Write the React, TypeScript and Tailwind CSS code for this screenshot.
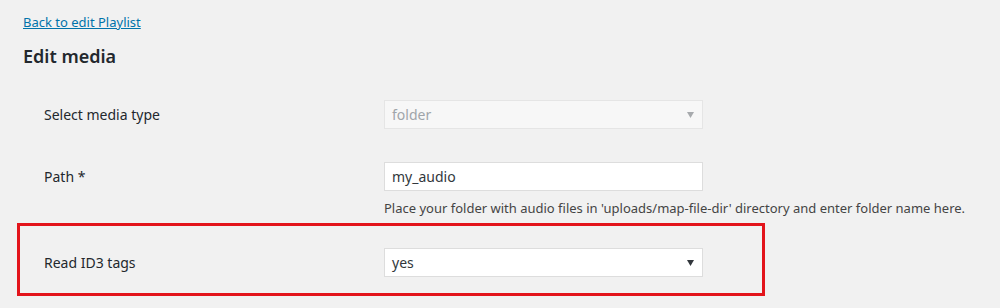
const font = "font-['Segoe_UI','Noto_Sans',sans-serif]";

const Arrow = ({ muted }: { muted?: boolean }) => (
    <svg width="7" height="6" viewBox="0 0 7 6" className="absolute right-[8px] top-1/2 -translate-y-1/2">
        <path d="M0 0 L7 0 L3.5 6 Z" fill={muted ? "#a7aaad" : "#32373c"} />
    </svg>
);

const SelectBox = ({ value, disabled }: { value: string; disabled?: boolean }) => (
    <div
        className={`relative h-[29px] w-[319px] border flex items-center pl-[7px] text-[14px] ${
            disabled ? "bg-[#f7f7f7] border-[#e5e5e5] text-[#a0a5aa]" : "bg-white border-[#dddddd] text-[#32373c]"
        }`}
    >
        {value}
        <Arrow muted={disabled} />
    </div>
);

export default function App() {
    return (
        <div className={`w-[1000px] h-[308px] bg-[#f1f1f1] text-[#23282d] ${font}`}>
            <div className="pl-[23px] pt-[9px]">
                <a href="#" className="text-[13px] leading-[20px] text-[#0073aa] underline">
                    Back to edit Playlist
                </a>
                <h2 className="mt-[11px] text-[18px] leading-[24px] font-semibold text-[#23282d]">Edit media</h2>
            </div>

            <div className="mt-[32px]">
                <div className="flex items-center pl-[44px]">
                    <div className="w-[340px] text-[14px]">Select media type</div>
                    <SelectBox value="folder" disabled />
                </div>

                <div className="flex items-start pl-[44px] mt-[33px]">
                    <div className="w-[340px] text-[14px] leading-[29px]">Path *</div>
                    <div>
                        <div className="h-[29px] w-[319px] bg-white border border-[#dddddd] flex items-center pl-[7px] text-[14px] text-[#32373c]">
                            my_audio
                        </div>
                        <p className="mt-[7px] text-[13px] leading-[20px] text-[#444]">
                            Place your folder with audio files in 'uploads/map-file-dir' directory and enter folder name here.
                        </p>
                    </div>
                </div>

                <div className="ml-[17px] mt-[5px] w-[748px] h-[73px] border-[3px] border-[#e3141b] flex items-center pl-[24px] pt-[6px]">
                    <div className="w-[340px] text-[14px]">Read ID3 tags</div>
                    <SelectBox value="yes" />
                </div>
            </div>
        </div>
    );
}
